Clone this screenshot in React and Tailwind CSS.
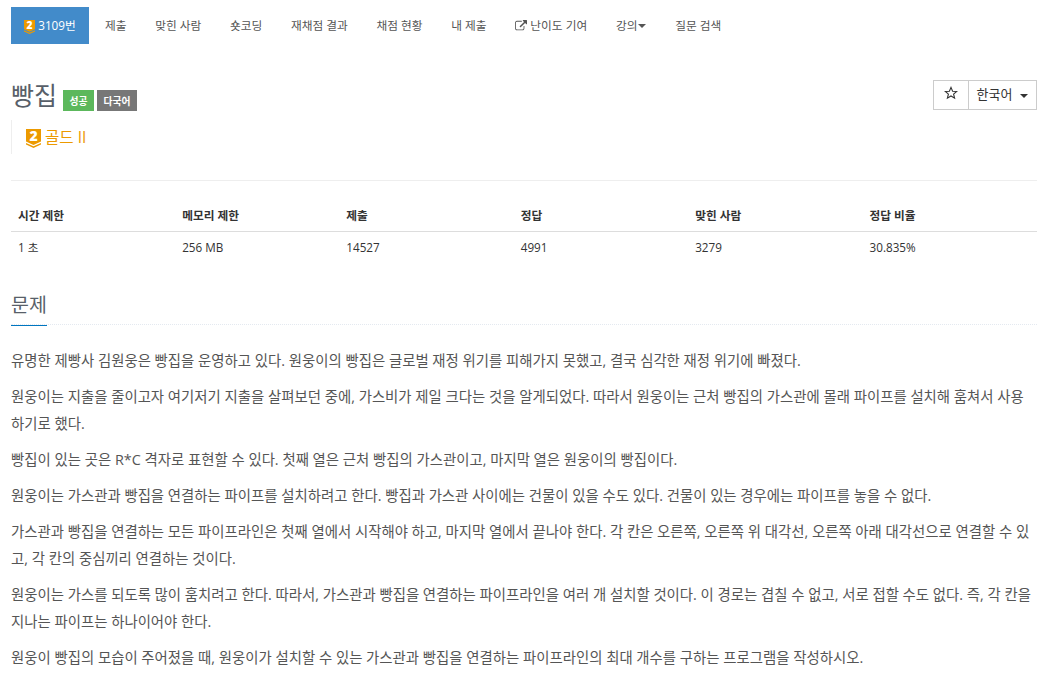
const navItems = [
  { label: "제출" },
  { label: "맞힌 사람" },
  { label: "숏코딩" },
  { label: "재채점 결과" },
  { label: "채점 현황" },
  { label: "내 제출" },
  { label: "난이도 기여", external: true },
  { label: "강의", caret: true },
  { label: "질문 검색" },
];

const limits = [
  { title: "시간 제한", value: "1 초", width: "w-[16%]" },
  { title: "메모리 제한", value: "256 MB", width: "w-[16%]" },
  { title: "제출", value: "14527", width: "w-[17%]" },
  { title: "정답", value: "4991", width: "w-[17%]" },
  { title: "맞힌 사람", value: "3279", width: "w-[17%]" },
  { title: "정답 비율", value: "30.835%", width: "w-[17%]" },
];

const paragraphs = [
  "유명한 제빵사 김원웅은 빵집을 운영하고 있다. 원웅이의 빵집은 글로벌 재정 위기를 피해가지 못했고, 결국 심각한 재정 위기에 빠졌다.",
  "원웅이는 지출을 줄이고자 여기저기 지출을 살펴보던 중에, 가스비가 제일 크다는 것을 알게되었다. 따라서 원웅이는 근처 빵집의 가스관에 몰래 파이프를 설치해 훔쳐서 사용하기로 했다.",
  "빵집이 있는 곳은 R*C 격자로 표현할 수 있다. 첫째 열은 근처 빵집의 가스관이고, 마지막 열은 원웅이의 빵집이다.",
  "원웅이는 가스관과 빵집을 연결하는 파이프를 설치하려고 한다. 빵집과 가스관 사이에는 건물이 있을 수도 있다. 건물이 있는 경우에는 파이프를 놓을 수 없다.",
  "가스관과 빵집을 연결하는 모든 파이프라인은 첫째 열에서 시작해야 하고, 마지막 열에서 끝나야 한다. 각 칸은 오른쪽, 오른쪽 위 대각선, 오른쪽 아래 대각선으로 연결할 수 있고, 각 칸의 중심끼리 연결하는 것이다.",
  "원웅이는 가스를 되도록 많이 훔치려고 한다. 따라서, 가스관과 빵집을 연결하는 파이프라인을 여러 개 설치할 것이다. 이 경로는 겹칠 수 없고, 서로 접할 수도 없다. 즉, 각 칸을 지나는 파이프는 하나이어야 한다.",
  "원웅이 빵집의 모습이 주어졌을 때, 원웅이가 설치할 수 있는 가스관과 빵집을 연결하는 파이프라인의 최대 개수를 구하는 프로그램을 작성하시오.",
];

function TierIcon({ className }) {
  return (
    <svg viewBox="0 0 15 19" className={`overflow-visible ${className}`}>
      <path d="M0 0h15v12.6L7.5 16 0 12.6z" fill="#ec9a00" />
      <path d="M0 14l7.5 3.3L15 14v1.6L7.5 19 0 15.6z" fill="#ec9a00" />
      <text x="7.5" y="12.3" textAnchor="middle" fontSize="14" fontWeight="800" fontFamily="Open Sans, sans-serif" fill="#fff">
        2
      </text>
    </svg>
  );
}

function ExternalIcon({ className }) {
  return (
    <svg viewBox="0 0 1792 1792" className={className} fill="currentColor">
      <path d="M1408 928v320q0 119-84.5 203.5t-203.5 84.5h-832q-119 0-203.5-84.5t-84.5-203.5v-832q0-119 84.5-203.5t203.5-84.5h704q14 0 23 9t9 23v64q0 14-9 23t-23 9h-704q-66 0-113 47t-47 113v832q0 66 47 113t113 47h832q66 0 113-47t47-113v-320q0-14 9-23t23-9h64q14 0 23 9t9 23zm384-864v512q0 26-19 45t-45 19-45-19l-176-176-652 652q-10 10-23 10t-23-10l-114-114q-10-10-10-23t10-23l652-652-176-176q-19-19-19-45t19-45 45-19h512q26 0 45 19t19 45z" />
    </svg>
  );
}

function Caret({ className = "" }) {
  return <span className={`inline-block border-x-4 border-t-4 border-x-transparent ${className}`} />;
}

export default function App() {
  return (
    <div className="h-[681px] overflow-hidden bg-white pl-[11px] pr-[17px] pt-[7px] font-['Open_Sans','Noto_Sans_CJK_KR',sans-serif] text-[#333]">
      <nav className="flex h-[37px] items-center text-[11.7px] text-[#555]">
        <a className="mr-[1.5px] flex h-full w-[78px] shrink-0 items-center justify-center gap-[3px] bg-[#428bca] text-white">
          <TierIcon className="mt-[2px] h-[14px] w-[11px]" />
          <span>3109번</span>
        </a>
        {navItems.map((item) => (
          <a key={item.label} className="flex items-center whitespace-nowrap px-[14.38px] pt-px">
            {item.external && <ExternalIcon className="mr-[3px] size-3" />}
            {item.label}
            {item.caret && <Caret className="ml-px" />}
          </a>
        ))}
      </nav>

      <header className="mt-[36px] flex items-start justify-between">
        <div className="flex h-[31px] items-end">
          <h1 className="mr-[6px] text-[25px] leading-[31px] text-[#585f69]">빵집</h1>
          <span className="mr-[3px] h-[21px] w-[31px] bg-[#5cb85c] pt-px text-center text-[9.75px] font-bold leading-[21px] text-white">성공</span>
          <span className="h-[21px] w-[40px] bg-[#777] pt-px text-center text-[9.75px] font-bold leading-[21px] text-white">다국어</span>
        </div>
        <div className="flex h-[30px] w-[104px] border border-[#ccc]">
          <button className="flex w-[35px] items-center justify-center border-r border-[#ccc] pb-1">
            <svg viewBox="0 0 14 14" className="size-3.5" fill="none" stroke="#333" strokeWidth="1.1">
              <path d="M7 1.4l1.6 3.8 4.1.3-3.1 2.7 1 4L7 10l-3.6 2.2 1-4-3.1-2.7 4.1-.3z" />
            </svg>
          </button>
          <button className="flex flex-1 items-center justify-center gap-2 text-[13px]">
            한국어 <Caret className="mt-[2px]" />
          </button>
        </div>
      </header>

      <div className="mt-[9px] flex h-[34px] items-center border-l border-[#eee] pl-[14px] text-[#ec9a00]">
        <TierIcon className="mr-1 mt-[2px] h-[19px] w-[15px]" />
        <span className="text-[15.6px] leading-[24px]">골드 II</span>
      </div>

      <table className="mt-[26px] w-full table-fixed border-t border-[#eee] text-left text-[11.7px]">
        <thead>
          <tr className="border-b border-[#ddd]">
            {limits.map((item) => (
              <th key={item.title} className={`${item.width} h-[51px] px-[7px] pt-[20px] font-bold`}>
                {item.title}
              </th>
            ))}
          </tr>
        </thead>
        <tbody>
          <tr>
            {limits.map((item) => (
              <td key={item.title} className="h-[31px] px-[7px] pt-px">
                {item.value}
              </td>
            ))}
          </tr>
        </tbody>
      </table>

      <div className="mt-[24px] flex h-[38px] border-b border-dotted border-[#e4e9f0]">
        <h2 className="h-[39px] border-b border-[#0076c0] text-[19.5px] leading-[36px] text-[#585f69]">문제</h2>
      </div>

      <div className="mt-[22px] space-y-[9px] break-all pr-1 text-[14.4px] leading-[27px] text-[#555]">
        {paragraphs.map((text) => (
          <p key={text}>{text}</p>
        ))}
      </div>
    </div>
  );
}
